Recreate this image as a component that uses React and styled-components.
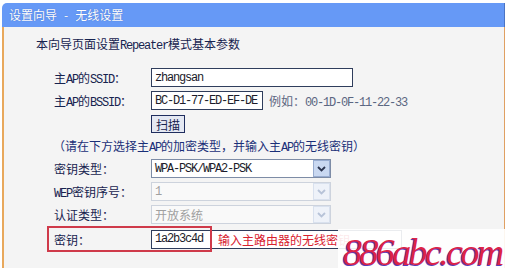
import React from "react";
import styled, { createGlobalStyle } from "styled-components";

const Global = createGlobalStyle`
  html, body { margin: 0; padding: 0; background: #ffffff; }
  body { font-family: "Noto Sans CJK SC", sans-serif; font-size: 12px; }
  * { box-sizing: border-box; }
`;

const Page = styled.div`
  position: relative;
  width: 513px;
  height: 268px;
  overflow: hidden;
  padding: 3px 0 0 2px;
  background: #ffffff;
`;

const Window = styled.div`
  width: 503px;
  display: flex;
  flex-direction: column;
`;

const TitleBar = styled.div`
  height: 24px;
  background: #6699f6;
  border-top-left-radius: 5px;
  border-right: 1px solid #4b74c4;
  color: #ffffff;
  font-size: 12px;
  line-height: 24px;
  padding-left: 7px;
  display: flex;
  align-items: center;
  text-shadow: 0 0 1px rgba(40, 70, 150, 0.6);
`;

const Dash = styled.span`
  padding: 0 7px;
`;

const Panel = styled.div`
  height: 241px;
  background: #f4f4f4;
  border-left: 2px solid #e8a85c;
  border-right: 1px solid #e0a062;
  display: flex;
  flex-direction: column;
`;

const Heading = styled.div`
  margin-top: 7px;
  padding-left: 32px;
  height: 20px;
  line-height: 20px;
  color: #17234f;
  white-space: nowrap;
`;

const Lat = styled.span`
  font-family: "Liberation Mono", monospace;
  letter-spacing: -1.2px;
`;

const Form = styled.div`
  margin-top: 12px;
  padding-left: 50px;
  display: flex;
  flex-direction: column;
`;

const Row = styled.div`
  position: relative;
  display: grid;
  grid-template-columns: 97px auto;
  align-items: center;
  height: ${(p) => p.$h || 23}px;
  color: #17234f;
  white-space: nowrap;
`;

const Note = styled.div`
  height: 22px;
  line-height: 22px;
  margin-left: -1px;
  color: #1a2f78;
  white-space: nowrap;
`;

const Cell = styled.div`
  display: flex;
  align-items: center;
  grid-column: 2;
`;

const Field = styled.div`
  width: ${(p) => p.$w}px;
  height: 19px;
  background: #ffffff;
  border: 1px solid #2f3d5c;
  padding-left: 3px;
  display: flex;
  align-items: center;
  font-family: "Liberation Mono", monospace;
  letter-spacing: -1.2px;
  font-size: 12px;
  color: #1b1b2a;
  white-space: nowrap;
  overflow: hidden;
`;

const Example = styled.span`
  margin-left: 6px;
  color: #5b6681;
`;

const Button = styled.div`
  width: 34px;
  height: 18px;
  margin-top: 1px;
  background: #e4e8f2;
  border: 1px solid #1f2d5e;
  color: #17234f;
  display: flex;
  align-items: center;
  justify-content: center;
  font-size: 12px;
`;

const Select = styled.div`
  width: 180px;
  height: 19px;
  background: ${(p) => (p.$disabled ? "#f9f9f9" : "#ffffff")};
  border: 1px solid ${(p) => (p.$disabled ? "#cdd3dd" : "#7d8ca6")};
  display: flex;
  align-items: center;
  justify-content: space-between;
  padding-left: 3px;
  color: ${(p) => (p.$disabled ? "#a0a0a0" : "#1b1b2a")};
`;

const SelText = styled.span`
  font-family: ${(p) => (p.$mono ? '"Liberation Mono", monospace' : '"Noto Sans CJK SC", sans-serif')};
  letter-spacing: ${(p) => (p.$mono ? "-1.2px" : "0")};
  font-size: 12px;
`;

const Arrow = styled.div`
  width: 17px;
  height: 17px;
  background: ${(p) => (p.$disabled ? "#eef2f9" : "#c9d8f1")};
  border: 1px solid ${(p) => (p.$disabled ? "#d9e1ee" : "#98acd0")};
  display: flex;
  align-items: center;
  justify-content: center;
`;

const RedBox = styled.div`
  position: absolute;
  left: -7px;
  top: 0;
  width: 165px;
  height: 26px;
  border: 2px solid #cf3a4a;
  pointer-events: none;
`;

const Hint = styled.span`
  margin-left: 15px;
  font-family: "Noto Sans CJK SC", sans-serif;
  letter-spacing: 0;
  color: #d8202e;
`;

const Watermark = styled.div`
  position: absolute;
  left: 338px;
  top: 229px;
  right: 0;
  bottom: 0;
  background: rgba(255, 255, 255, 0.9);
`;

const Brand = styled.div`
  position: absolute;
  left: 5px;
  top: 8px;
  font-family: "Liberation Serif", serif;
  font-style: italic;
  font-size: 38px;
  line-height: 30px;
  letter-spacing: -2.6px;
  color: #dc2348;
  text-shadow: -1px 1px 0 #5b3ab8;
  white-space: nowrap;
`;

const Chevron = ({ disabled }) => (
  <svg width="9" height="6" viewBox="0 0 9 6">
    <path
      d="M1 1 L4.5 4.5 L8 1"
      fill="none"
      stroke={disabled ? "#b7c3d8" : "#2b3550"}
      strokeWidth="1.8"
    />
  </svg>
);

export default function App() {
  return (
    <>
      <Global />
      <Page>
        <Window>
          <TitleBar>
            设置向导<Dash>-</Dash>无线设置
          </TitleBar>
          <Panel>
            <Heading>
              本向导页面设置<Lat>Repeater</Lat>模式基本参数
            </Heading>
            <Form>
              <Row>
                <span>
                  主<Lat>AP</Lat>的<Lat>SSID</Lat>：
                </span>
                <Cell>
                  <Field $w={202}>zhangsan</Field>
                </Cell>
              </Row>
              <Row>
                <span>
                  主<Lat>AP</Lat>的<Lat>BSSID</Lat>：
                </span>
                <Cell>
                  <Field $w={112}>BC-D1-77-ED-EF-DE</Field>
                  <Example>
                    例如：<Lat>00-1D-0F-11-22-33</Lat>
                  </Example>
                </Cell>
              </Row>
              <Row>
                <Cell>
                  <Button>扫描</Button>
                </Cell>
              </Row>
              <Note>
                （请在下方选择主<Lat>AP</Lat>的加密类型，并输入主<Lat>AP</Lat>的无线密钥）
              </Note>
              <Row>
                <span>密钥类型：</span>
                <Cell>
                  <Select>
                    <SelText $mono>WPA-PSK/WPA2-PSK</SelText>
                    <Arrow>
                      <Chevron />
                    </Arrow>
                  </Select>
                </Cell>
              </Row>
              <Row>
                <span>
                  <Lat>WEP</Lat>密钥序号：
                </span>
                <Cell>
                  <Select $disabled>
                    <SelText $mono>1</SelText>
                    <Arrow $disabled>
                      <Chevron disabled />
                    </Arrow>
                  </Select>
                </Cell>
              </Row>
              <Row>
                <span>认证类型：</span>
                <Cell>
                  <Select $disabled>
                    <SelText>开放系统</SelText>
                    <Arrow $disabled>
                      <Chevron disabled />
                    </Arrow>
                  </Select>
                </Cell>
              </Row>
              <Row $h={26}>
                <span>密钥：</span>
                <Cell>
                  <Field $w={251}>
                    1a2b3c4d
                    <Hint>输入主路由器的无线密钥</Hint>
                  </Field>
                </Cell>
                <RedBox />
              </Row>
            </Form>
          </Panel>
        </Window>
        <Watermark>
          <Brand>886abc.com</Brand>
        </Watermark>
      </Page>
    </>
  );
}
